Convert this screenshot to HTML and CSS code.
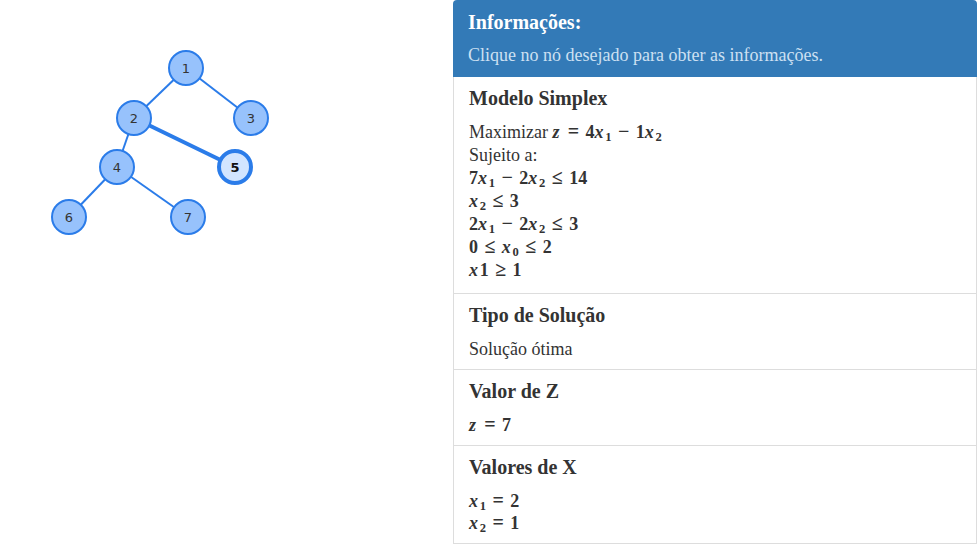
FILE: index.html
```html
<!DOCTYPE html>
<html lang="pt">
<head>
<meta charset="utf-8">
<title>Simplex</title>
<link rel="stylesheet" href="styles.css">
</head>
<body>
<div class="page">
  <div class="graph-col">
    <svg class="graph" width="453" height="544" viewBox="0 0 453 544">
      <g class="edges">
        <line x1="186" y1="68" x2="134" y2="118"/>
        <line x1="186" y1="68" x2="251" y2="118"/>
        <line x1="134" y1="118" x2="117" y2="167"/>
        <line class="sel" x1="134" y1="118" x2="235" y2="167"/>
        <line x1="117" y1="167" x2="69" y2="217"/>
        <line x1="117" y1="167" x2="188" y2="217"/>
      </g>
      <g class="nodes">
        <circle cx="186" cy="68" r="17"/>
        <circle cx="134" cy="118" r="17"/>
        <circle cx="251" cy="118" r="17"/>
        <circle cx="117" cy="167" r="17"/>
        <circle class="sel" cx="235" cy="167" r="16"/>
        <circle cx="69" cy="217" r="17"/>
        <circle cx="188" cy="217" r="17"/>
      </g>
      <g class="labels">
        <text x="186" y="73">1</text>
        <text x="134" y="123">2</text>
        <text x="251" y="123">3</text>
        <text x="117" y="172">4</text>
        <text class="sel" x="235" y="172">5</text>
        <text x="69" y="222">6</text>
        <text x="188" y="222">7</text>
      </g>
    </svg>
  </div>
  <div class="panel">
    <div class="panel-heading">
      <h3 class="panel-title">Informações:</h3>
      <p class="panel-sub">Clique no nó desejado para obter as informações.</p>
    </div>
    <div class="list-group">
      <div class="item">
        <h4 class="item-title">Modelo Simplex</h4>
        <div class="line">Maximizar <span class="m"><i>z</i><span class="rel">=</span>4<i>x</i><sub>1</sub><span class="op">−</span>1<i>x</i><sub>2</sub></span></div>
        <div class="line">Sujeito a:</div>
        <div class="line"><span class="m">7<i>x</i><sub>1</sub><span class="op">−</span>2<i>x</i><sub>2</sub><span class="rel">≤</span>14</span></div>
        <div class="line"><span class="m"><i>x</i><sub>2</sub><span class="rel">≤</span>3</span></div>
        <div class="line"><span class="m">2<i>x</i><sub>1</sub><span class="op">−</span>2<i>x</i><sub>2</sub><span class="rel">≤</span>3</span></div>
        <div class="line"><span class="m">0<span class="rel">≤</span><i>x</i><sub>0</sub><span class="rel">≤</span>2</span></div>
        <div class="line"><span class="m"><i>x</i>1<span class="rel">≥</span>1</span></div>
      </div>
      <div class="item">
        <h4 class="item-title">Tipo de Solução</h4>
        <div class="line">Solução ótima</div>
      </div>
      <div class="item">
        <h4 class="item-title">Valor de Z</h4>
        <div class="line"><span class="m"><i>z</i><span class="rel">=</span>7</span></div>
      </div>
      <div class="item">
        <h4 class="item-title">Valores de X</h4>
        <div class="line"><span class="m"><i>x</i><sub>1</sub><span class="rel">=</span>2</span></div>
        <div class="line"><span class="m"><i>x</i><sub>2</sub><span class="rel">=</span>1</span></div>
      </div>
    </div>
  </div>
</div>
</body>
</html>
```

FILE: styles.css
```css
* { box-sizing: border-box; }
html, body { margin: 0; padding: 0; background: #fff; }
body {
  font-family: "Liberation Serif", "Times New Roman", serif;
  font-size: 18px;
  color: #333;
  overflow: hidden;
}
.page {
  display: flex;
  width: 978px;
  height: 544px;
}
.graph-col {
  width: 453px;
  flex: none;
}
.graph { display: block; }
.edges line {
  stroke: #2b7ce9;
  stroke-width: 2;
}
.edges line.sel { stroke-width: 4; }
.nodes circle {
  fill: #97c2fc;
  stroke: #2b7ce9;
  stroke-width: 2;
}
.nodes circle.sel {
  fill: #d2e5ff;
  stroke-width: 4;
}
.labels text {
  font-family: "DejaVu Sans", Verdana, sans-serif;
  font-size: 13px;
  fill: #343434;
  text-anchor: middle;
}
.labels text.sel { font-weight: bold; fill: #111; }

.panel {
  width: 524px;
  flex: none;
  border-radius: 4px 4px 0 0;
  overflow: hidden;
}
.panel-heading {
  background: #337ab7;
  color: #fff;
  padding: 10px 15px 11px;
}
.panel-title {
  margin: 0 0 10px;
  font-size: 20px;
  line-height: 24px;
  font-weight: bold;
}
.panel-sub {
  margin: 0;
  font-size: 18px;
  line-height: 22px;
  color: #cde0f2;
}
.item {
  border: 1px solid #ddd;
  border-top: 0;
  padding: 10px 15px 9px;
}
.item + .item { border-top: 1px solid #ddd; margin-top: -1px; }
.item:first-child { border-top: 0; padding-bottom: 11px; }
.item-title {
  margin: 0 0 12px;
  font-size: 20px;
  line-height: 22px;
  font-weight: bold;
}
.line {
  font-size: 18px;
  height: 22px;
  line-height: 22px;
  white-space: nowrap;
}
.item:first-child .line { height: 23px; line-height: 23px; }
.m {
  font-size: 18px;
  font-weight: bold;
  line-height: 1;
}
.m i { font-style: italic; margin-right: 0.1em; }
.m sub {
  font-size: 0.7em;
  line-height: 0;
  vertical-align: -0.25em;
}
.m .op,
.m .rel {
  font-size: 20px;
  margin: 0 0.32em;
  font-weight: bold;
}
```
